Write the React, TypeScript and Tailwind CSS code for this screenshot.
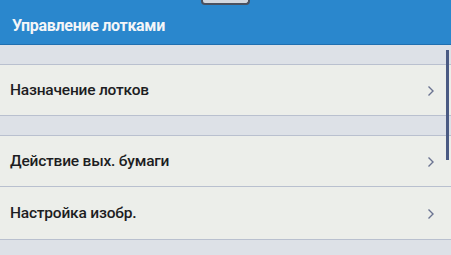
import React from 'react';

const items = ['Назначение лотков', 'Действие вых. бумаги', 'Настройка изобр.'];

function Row({ label, tall }: { label: string; tall?: boolean }) {
  return (
    <div
      className={
        tall
          ? 'flex h-[53px] items-center justify-between border-b border-[#b9c0cf] bg-[#eceeea] pl-[10px] pr-[16px] pt-[2px]'
          : 'flex h-[51px] items-center justify-between border-b border-[#b9c0cf] bg-[#eceeea] pl-[10px] pr-[16px] pt-[2px]'
      }
    >
      <span className="text-[15.5px] font-medium tracking-[-0.2px] text-[#1c1d22]">{label}</span>
      <svg width="8" height="12" viewBox="0 0 8 12" fill="none">
        <path d="M1.5 1.5 L6 6 L1.5 10.5" stroke="#6a7391" strokeWidth="1.4" />
      </svg>
    </div>
  );
}

function Spacer() {
  return <div className="h-[20px] border-b border-[#b9c0cf] bg-[#dde1e7]" />;
}

export default function App() {
  return (
    <div className="relative h-[255px] w-[451px] overflow-hidden bg-[#dde1e7] font-['Roboto',sans-serif]">
      <div className="relative flex h-[45px] items-center border-b border-[#1f6fb0] bg-[#2a87cd] pl-[12px] pt-[8px]">
        <div className="absolute left-[201px] top-0 h-[5px] w-[49px] rounded-b-[4px] border-x-2 border-b-2 border-[#4a5160] bg-[#d3d8e0]" />
        <span className="text-[16px] font-bold tracking-[-0.3px] text-[#f4f6f8]">Управление лотками</span>
      </div>
      <div className="relative">
        <Spacer />
        <Row label={items[0]} />
        <Spacer />
        <Row label={items[1]} />
        <Row label={items[2]} tall />
        <div className="absolute right-[2px] top-[5px] h-[110px] w-[3px] bg-[#4a5a82]" />
      </div>
    </div>
  );
}
